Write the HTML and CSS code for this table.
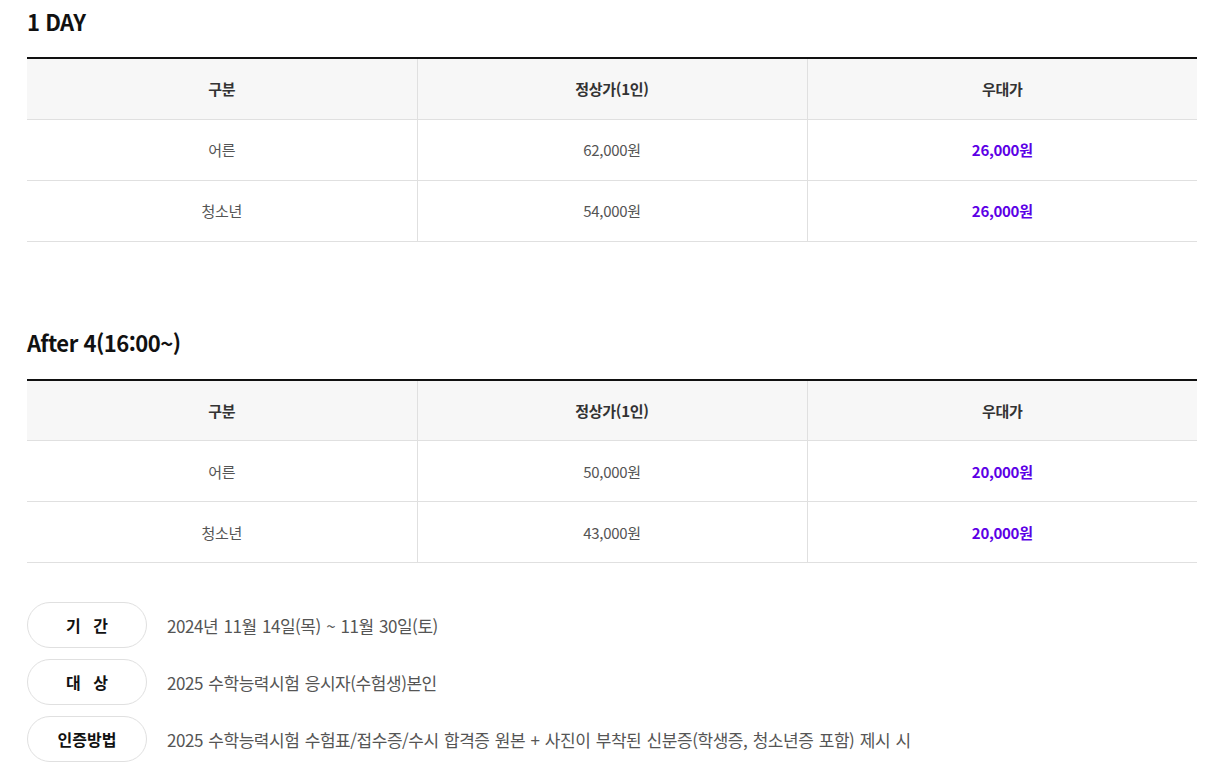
FILE: index.html
```html
<!DOCTYPE html>
<html lang="ko">
<head>
<meta charset="utf-8">
<title>요금 안내</title>
<link rel="stylesheet" href="styles.css">
</head>
<body>
<div class="wrap">
  <section class="price-section">
    <h3 class="price-title">1 DAY</h3>
    <table class="price-table">
      <thead>
        <tr><th>구분</th><th>정상가(1인)</th><th>우대가</th></tr>
      </thead>
      <tbody>
        <tr><td>어른</td><td>62,000원</td><td class="sale">26,000원</td></tr>
        <tr><td>청소년</td><td>54,000원</td><td class="sale">26,000원</td></tr>
      </tbody>
    </table>
  </section>
  <section class="price-section second">
    <h3 class="price-title">After 4(16:00~)</h3>
    <table class="price-table">
      <thead>
        <tr><th>구분</th><th>정상가(1인)</th><th>우대가</th></tr>
      </thead>
      <tbody>
        <tr><td>어른</td><td>50,000원</td><td class="sale">20,000원</td></tr>
        <tr><td>청소년</td><td>43,000원</td><td class="sale">20,000원</td></tr>
      </tbody>
    </table>
  </section>
  <ul class="info-list">
    <li class="info-row"><span class="pill spaced">기 간</span><span class="info-text">2024년 11월 14일(목) ~ 11월 30일(토)</span></li>
    <li class="info-row"><span class="pill spaced">대 상</span><span class="info-text">2025 수학능력시험 응시자(수험생)본인</span></li>
    <li class="info-row"><span class="pill">인증방법</span><span class="info-text">2025 수학능력시험 수험표/접수증/수시 합격증 원본 + 사진이 부착된 신분증(학생증, 청소년증 포함) 제시 시</span></li>
  </ul>
</div>
</body>
</html>
```

FILE: styles.css
```css
* { box-sizing: border-box; }
html, body { margin: 0; padding: 0; background: #fff; }
body {
  font-family: "Noto Sans CJK KR", "Noto Sans", sans-serif;
  color: #333;
}
.wrap {
  width: 1170px;
  margin-left: 27px;
  padding-top: 5px;
}
.price-title {
  margin: 0 0 19px;
  font-size: 22px;
  line-height: 33px;
  font-weight: 700;
  color: #111;
  letter-spacing: -0.5px;
}
.second { margin-top: 84px; }
.second .price-title { margin-bottom: 20px; }
.price-table {
  width: 100%;
  border-collapse: collapse;
  table-layout: fixed;
  border-top: 2px solid #111;
}
.price-table th,
.price-table td {
  height: 61px;
  padding: 0;
  text-align: center;
  vertical-align: middle;
  border-bottom: 1px solid #e0e0e0;
  border-left: 1px solid #e0e0e0;
  font-size: 15px;
  letter-spacing: -0.3px;
}
.price-table th:first-child,
.price-table td:first-child { border-left: 0; }
.price-table th {
  background: #f7f7f7;
  font-weight: 700;
  color: #333;
}
.price-table td {
  color: #555;
  font-weight: 400;
}
.price-table td.sale {
  color: #5c00e6;
  font-weight: 700;
}
.info-list {
  list-style: none;
  margin: 39px 0 0;
  padding: 0;
  display: flex;
  flex-direction: column;
  gap: 11px;
}
.info-row {
  display: flex;
  align-items: center;
  gap: 20px;
}
.pill {
  width: 120px;
  height: 46px;
  border: 1px solid #e0e0e0;
  border-radius: 23px;
  display: flex;
  align-items: center;
  justify-content: center;
  font-size: 16px;
  font-weight: 700;
  color: #111;
  flex: none;
}
.spaced { word-spacing: 8px; }
.info-text {
  font-size: 17px;
  color: #555;
  letter-spacing: -0.45px;
  word-spacing: 1px;
}
```
